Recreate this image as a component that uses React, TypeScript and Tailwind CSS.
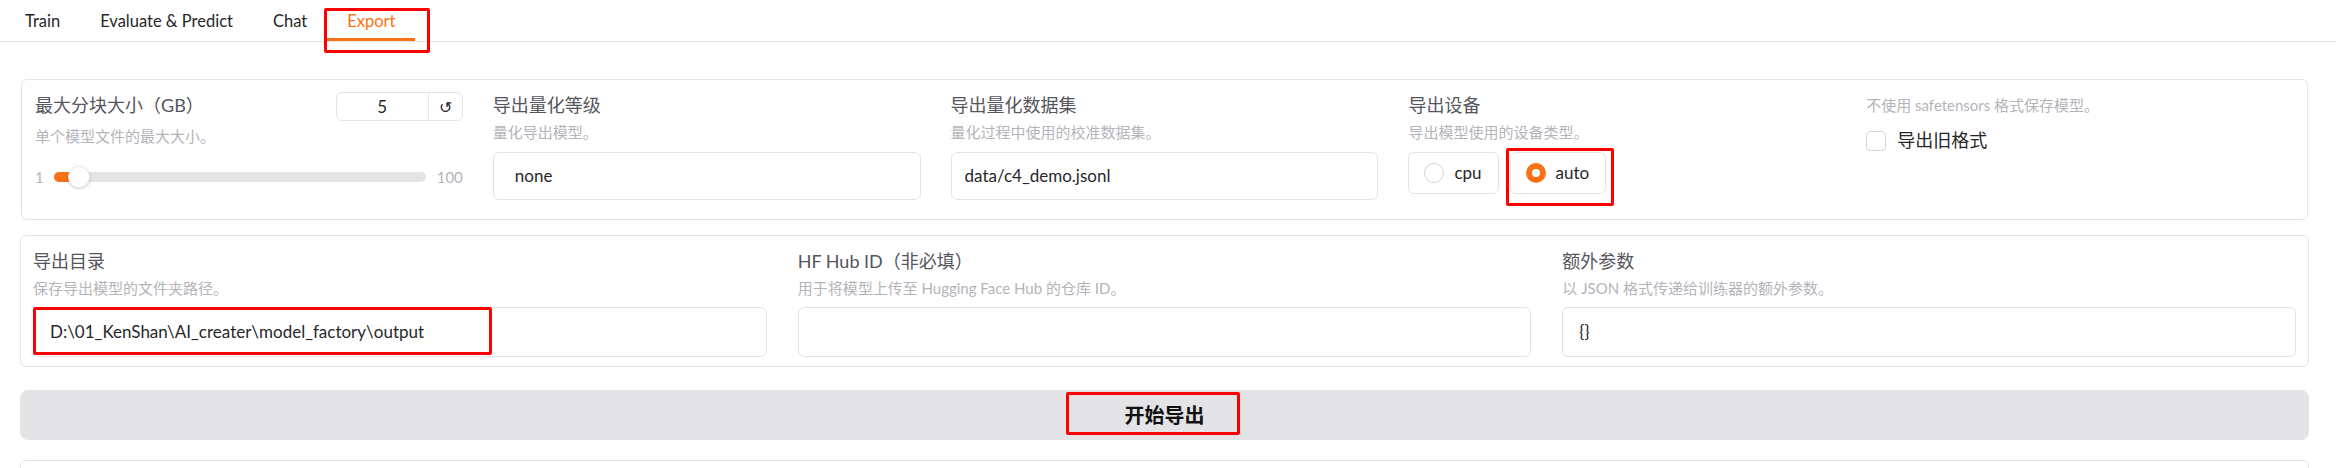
import { useState } from 'react';

const FONT = "font-['Lato','Noto_Sans_CJK_SC',sans-serif]";

function Label({ children }: { children: React.ReactNode }) {
    return <p className="h-[24px] text-[18px] leading-[24px] text-[#55555d]">{children}</p>;
}

function Info({ children }: { children: React.ReactNode }) {
    return <p className="mt-[5px] h-[20px] text-[15px] leading-[20px] text-[#b4b4bb]">{children}</p>;
}

function TextBox({ value, pad = 'px-[13px]', h = 'h-[48px]' }: { value: string; pad?: string; h?: string }) {
    return (
        <div className={`flex w-full items-center rounded-[6px] border border-[#e4e4e7] bg-white text-[17px] text-[#27272a] ${pad} ${h}`}>
            {value}
        </div>
    );
}

function RedBox({ className }: { className: string }) {
    return <div className={`pointer-events-none absolute rounded-[2px] border-[3px] border-[#ff0000] ${className}`} />;
}

export default function App() {
    const [tab, setTab] = useState('Export');
    const [device, setDevice] = useState('auto');
    const tabs = ['Train', 'Evaluate & Predict', 'Chat', 'Export'];

    return (
        <div className={`h-[468px] w-full overflow-hidden bg-white ${FONT}`}>
            {/* tab bar */}
            <div className="flex h-[42px] border-b border-[#e4e4e7] px-[5px]">
                {tabs.map((t) => (
                    <button
                        key={t}
                        type="button"
                        onClick={() => setTab(t)}
                        className={`relative flex h-full items-center border-b-[3px] px-[20px] pt-[5px] text-[16.5px] ${
                            tab === t ? 'border-[#f97316] text-[#f97316]' : 'border-transparent text-[#27272a]'
                        }`}
                    >
                        {t}
                        {t === 'Export' && <RedBox className="top-[8px] -left-[3px] h-[45px] w-[106px]" />}
                    </button>
                ))}
            </div>

            <div className="pr-[27px] pl-[20px]">
                {/* top settings */}
                <div className="mx-[1px] mt-[37px] grid h-[141px] grid-cols-5 gap-[30px] rounded-[6px] border border-[#e4e4e7] px-[13px] pt-[13px]">
                    <div>
                        <div className="flex items-start justify-between">
                            <Label>最大分块大小（GB）</Label>
                            <div className="-mt-[1px] flex h-[29px] w-[127px] rounded-[6px] border border-[#e4e4e7] text-[17px] text-[#27272a]">
                                <span className="flex flex-1 items-center justify-center">5</span>
                                <span className="flex w-[34px] items-center justify-center border-l border-[#e4e4e7] text-[16px]">↺</span>
                            </div>
                        </div>
                        <Info>单个模型文件的最大大小。</Info>
                        <div className="mt-[20px] flex h-[22px] items-center text-[15px] text-[#b4b4bb]">
                            <span className="w-[19px]">1</span>
                            <div className="relative h-[10px] flex-1 rounded-full bg-[#e4e4e7]">
                                <div className="h-full w-[22px] rounded-full bg-[#f97316]" />
                                <div className="absolute top-1/2 left-[14px] h-[22px] w-[22px] -translate-y-1/2 rounded-full border border-[#ececec] bg-white shadow-[0_1px_3px_rgba(0,0,0,0.18)]" />
                            </div>
                            <span className="w-[37px] text-right">100</span>
                        </div>
                    </div>

                    <div>
                        <Label>导出量化等级</Label>
                        <Info>量化导出模型。</Info>
                        <div className="mt-[10px]">
                            <TextBox value="none" pad="px-[21px]" />
                        </div>
                    </div>

                    <div>
                        <Label>导出量化数据集</Label>
                        <Info>量化过程中使用的校准数据集。</Info>
                        <div className="mt-[10px]">
                            <TextBox value="data/c4_demo.jsonl" />
                        </div>
                    </div>

                    <div>
                        <Label>导出设备</Label>
                        <Info>导出模型使用的设备类型。</Info>
                        <div className="relative mt-[10px] flex gap-[11px]">
                            {['cpu', 'auto'].map((d) => (
                                <button
                                    key={d}
                                    type="button"
                                    onClick={() => setDevice(d)}
                                    className="flex h-[42px] items-center gap-[10px] rounded-[6px] border border-[#e4e4e7] bg-white pr-[16px] pl-[15px] text-[17px] text-[#27272a]"
                                >
                                    {device === d ? (
                                        <span className="flex h-[20px] w-[20px] items-center justify-center rounded-full bg-[#f97316]">
                                            <span className="h-[8px] w-[8px] rounded-full bg-white" />
                                        </span>
                                    ) : (
                                        <span className="h-[20px] w-[20px] rounded-full border border-[#d4d4d8] bg-white" />
                                    )}
                                    {d}
                                </button>
                            ))}
                            <RedBox className="-top-[4px] left-[98px] h-[58px] w-[108px]" />
                        </div>
                    </div>

                    <div>
                        <p className="h-[24px] text-[15px] leading-[24px] text-[#b4b4bb]">不使用 safetensors 格式保存模型。</p>
                        <label className="mt-[10px] flex items-center gap-[11px] text-[18px] text-[#27272a]">
                            <span className="h-[20px] w-[20px] rounded-[4px] border border-[#d4d4d8] bg-white" />
                            导出旧格式
                        </label>
                    </div>
                </div>

                {/* output settings */}
                <div className="mt-[15px] grid h-[132px] grid-cols-3 gap-[31px] rounded-[6px] border border-[#e4e4e7] px-[12px] pt-[13px]">
                    <div>
                        <Label>导出目录</Label>
                        <Info>保存导出模型的文件夹路径。</Info>
                        <div className="relative mt-[9px]">
                            <TextBox value="D:\01_KenShan\AI_creater\model_factory\output" pad="px-[16px]" h="h-[50px]" />
                            <RedBox className="top-0 left-0 h-[48px] w-[459px]" />
                        </div>
                    </div>
                    <div>
                        <Label>HF Hub ID（非必填）</Label>
                        <Info>用于将模型上传至 Hugging Face Hub 的仓库 ID。</Info>
                        <div className="mt-[9px]">
                            <TextBox value="" h="h-[50px]" />
                        </div>
                    </div>
                    <div>
                        <Label>额外参数</Label>
                        <Info>以 JSON 格式传递给训练器的额外参数。</Info>
                        <div className="mt-[9px]">
                            <TextBox value="{}" pad="px-[16px]" h="h-[50px]" />
                        </div>
                    </div>
                </div>

                <button
                    type="button"
                    className="relative mt-[23px] flex h-[50px] w-full items-center justify-center rounded-[8px] bg-[#e4e4e7] text-[20px] font-bold text-[#111111]"
                >
                    开始导出
                    <RedBox className="top-[2px] left-[1046px] h-[43px] w-[174px]" />
                </button>

                <div className="mt-[20px] h-[40px] rounded-t-[6px] border border-[#e4e4e7]" />
            </div>
        </div>
    );
}
